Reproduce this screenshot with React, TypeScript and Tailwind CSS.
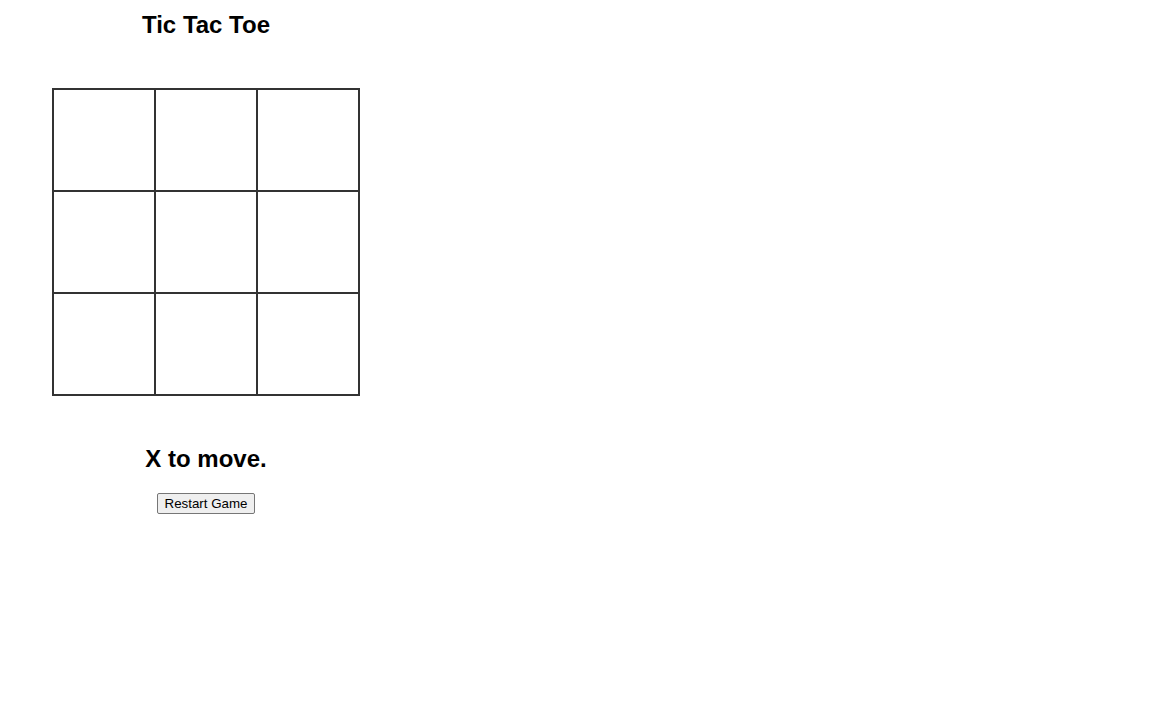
import { useState } from 'react';

export default function App() {
  const [squares, setSquares] = useState<(string | null)[]>(Array(9).fill(null));
  const [xNext, setXNext] = useState(true);

  const handleClick = (i: number) => {
    if (squares[i]) return;
    const next = squares.slice();
    next[i] = xNext ? 'X' : 'O';
    setSquares(next);
    setXNext(!xNext);
  };

  const restart = () => {
    setSquares(Array(9).fill(null));
    setXNext(true);
  };

  return (
    <div className="min-h-screen bg-white font-['Liberation_Sans',Arial,sans-serif] text-black">
      <div className="flex w-[412px] flex-col items-center">
        <h2 className="mt-[11px] text-[24px] leading-[27.6px] font-bold">Tic Tac Toe</h2>

        {/* Board */}
        <div className="mt-[49px] grid grid-cols-[repeat(3,102px)] border border-[#333]">
          {squares.map((sq, i) => (
            <div
              key={i}
              onClick={() => handleClick(i)}
              className="flex h-[102px] w-[102px] items-center justify-center border border-[#333] text-5xl font-bold"
            >
              {sq}
            </div>
          ))}
        </div>

        <h2 className="mt-[49px] text-[24px] leading-[27.6px] font-bold">
          {xNext ? 'X' : 'O'} to move.
        </h2>

        <button
          onClick={restart}
          className="mt-[21px] h-[21px] rounded-[2px] border border-[#767676] bg-[#efefef] px-[7px] text-[13.33px] leading-none text-black"
        >
          Restart Game
        </button>
      </div>
    </div>
  );
}
